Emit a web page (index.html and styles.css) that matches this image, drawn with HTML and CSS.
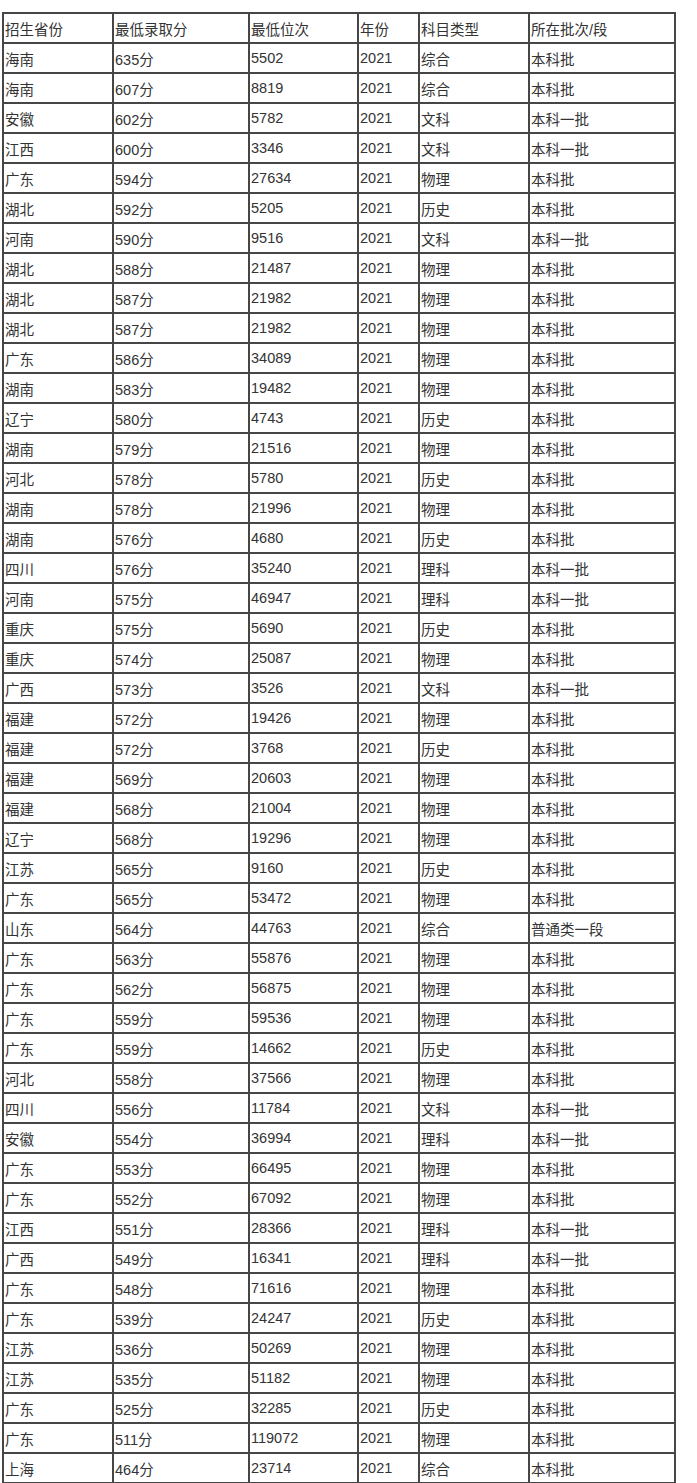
FILE: index.html
```html
<!DOCTYPE html>
<html lang="zh">
<head>
<meta charset="utf-8">
<title>录取分数</title>
<link rel="stylesheet" href="styles.css">
</head>
<body>
<div class="wrap">
<table class="scores">
<colgroup>
<col class="c1"><col class="c2"><col class="c3"><col class="c4"><col class="c5"><col class="c6">
</colgroup>
<tbody>
<tr><td>招生省份</td><td>最低录取分</td><td>最低位次</td><td>年份</td><td>科目类型</td><td>所在批次/段</td></tr>
<tr><td>海南</td><td>635分</td><td>5502</td><td>2021</td><td>综合</td><td>本科批</td></tr>
<tr><td>海南</td><td>607分</td><td>8819</td><td>2021</td><td>综合</td><td>本科批</td></tr>
<tr><td>安徽</td><td>602分</td><td>5782</td><td>2021</td><td>文科</td><td>本科一批</td></tr>
<tr><td>江西</td><td>600分</td><td>3346</td><td>2021</td><td>文科</td><td>本科一批</td></tr>
<tr><td>广东</td><td>594分</td><td>27634</td><td>2021</td><td>物理</td><td>本科批</td></tr>
<tr><td>湖北</td><td>592分</td><td>5205</td><td>2021</td><td>历史</td><td>本科批</td></tr>
<tr><td>河南</td><td>590分</td><td>9516</td><td>2021</td><td>文科</td><td>本科一批</td></tr>
<tr><td>湖北</td><td>588分</td><td>21487</td><td>2021</td><td>物理</td><td>本科批</td></tr>
<tr><td>湖北</td><td>587分</td><td>21982</td><td>2021</td><td>物理</td><td>本科批</td></tr>
<tr><td>湖北</td><td>587分</td><td>21982</td><td>2021</td><td>物理</td><td>本科批</td></tr>
<tr><td>广东</td><td>586分</td><td>34089</td><td>2021</td><td>物理</td><td>本科批</td></tr>
<tr><td>湖南</td><td>583分</td><td>19482</td><td>2021</td><td>物理</td><td>本科批</td></tr>
<tr><td>辽宁</td><td>580分</td><td>4743</td><td>2021</td><td>历史</td><td>本科批</td></tr>
<tr><td>湖南</td><td>579分</td><td>21516</td><td>2021</td><td>物理</td><td>本科批</td></tr>
<tr><td>河北</td><td>578分</td><td>5780</td><td>2021</td><td>历史</td><td>本科批</td></tr>
<tr><td>湖南</td><td>578分</td><td>21996</td><td>2021</td><td>物理</td><td>本科批</td></tr>
<tr><td>湖南</td><td>576分</td><td>4680</td><td>2021</td><td>历史</td><td>本科批</td></tr>
<tr><td>四川</td><td>576分</td><td>35240</td><td>2021</td><td>理科</td><td>本科一批</td></tr>
<tr><td>河南</td><td>575分</td><td>46947</td><td>2021</td><td>理科</td><td>本科一批</td></tr>
<tr><td>重庆</td><td>575分</td><td>5690</td><td>2021</td><td>历史</td><td>本科批</td></tr>
<tr><td>重庆</td><td>574分</td><td>25087</td><td>2021</td><td>物理</td><td>本科批</td></tr>
<tr><td>广西</td><td>573分</td><td>3526</td><td>2021</td><td>文科</td><td>本科一批</td></tr>
<tr><td>福建</td><td>572分</td><td>19426</td><td>2021</td><td>物理</td><td>本科批</td></tr>
<tr><td>福建</td><td>572分</td><td>3768</td><td>2021</td><td>历史</td><td>本科批</td></tr>
<tr><td>福建</td><td>569分</td><td>20603</td><td>2021</td><td>物理</td><td>本科批</td></tr>
<tr><td>福建</td><td>568分</td><td>21004</td><td>2021</td><td>物理</td><td>本科批</td></tr>
<tr><td>辽宁</td><td>568分</td><td>19296</td><td>2021</td><td>物理</td><td>本科批</td></tr>
<tr><td>江苏</td><td>565分</td><td>9160</td><td>2021</td><td>历史</td><td>本科批</td></tr>
<tr><td>广东</td><td>565分</td><td>53472</td><td>2021</td><td>物理</td><td>本科批</td></tr>
<tr><td>山东</td><td>564分</td><td>44763</td><td>2021</td><td>综合</td><td>普通类一段</td></tr>
<tr><td>广东</td><td>563分</td><td>55876</td><td>2021</td><td>物理</td><td>本科批</td></tr>
<tr><td>广东</td><td>562分</td><td>56875</td><td>2021</td><td>物理</td><td>本科批</td></tr>
<tr><td>广东</td><td>559分</td><td>59536</td><td>2021</td><td>物理</td><td>本科批</td></tr>
<tr><td>广东</td><td>559分</td><td>14662</td><td>2021</td><td>历史</td><td>本科批</td></tr>
<tr><td>河北</td><td>558分</td><td>37566</td><td>2021</td><td>物理</td><td>本科批</td></tr>
<tr><td>四川</td><td>556分</td><td>11784</td><td>2021</td><td>文科</td><td>本科一批</td></tr>
<tr><td>安徽</td><td>554分</td><td>36994</td><td>2021</td><td>理科</td><td>本科一批</td></tr>
<tr><td>广东</td><td>553分</td><td>66495</td><td>2021</td><td>物理</td><td>本科批</td></tr>
<tr><td>广东</td><td>552分</td><td>67092</td><td>2021</td><td>物理</td><td>本科批</td></tr>
<tr><td>江西</td><td>551分</td><td>28366</td><td>2021</td><td>理科</td><td>本科一批</td></tr>
<tr><td>广西</td><td>549分</td><td>16341</td><td>2021</td><td>理科</td><td>本科一批</td></tr>
<tr><td>广东</td><td>548分</td><td>71616</td><td>2021</td><td>物理</td><td>本科批</td></tr>
<tr><td>广东</td><td>539分</td><td>24247</td><td>2021</td><td>历史</td><td>本科批</td></tr>
<tr><td>江苏</td><td>536分</td><td>50269</td><td>2021</td><td>物理</td><td>本科批</td></tr>
<tr><td>江苏</td><td>535分</td><td>51182</td><td>2021</td><td>物理</td><td>本科批</td></tr>
<tr><td>广东</td><td>525分</td><td>32285</td><td>2021</td><td>历史</td><td>本科批</td></tr>
<tr><td>广东</td><td>511分</td><td>119072</td><td>2021</td><td>物理</td><td>本科批</td></tr>
<tr><td>上海</td><td>464分</td><td>23714</td><td>2021</td><td>综合</td><td>本科批</td></tr>
</tbody>
</table>
</div>
</body>
</html>
```

FILE: styles.css
```css
html, body {
  margin: 0;
  padding: 0;
  background: #ffffff;
}
.wrap {
  padding: 12px 0 0 2px;
}
.scores {
  border-collapse: collapse;
  table-layout: fixed;
  width: 672px;
  font-family: "Liberation Sans", "Noto Sans CJK SC", sans-serif;
  font-size: 14.5px;
  color: #333333;
}
.scores td {
  border: 2px solid #464646;
  padding: 0 0 0 1px;
  vertical-align: middle;
  white-space: nowrap;
  overflow: hidden;
  box-sizing: border-box;
  height: 30px;
}
.c1 { width: 110px; }
.c2 { width: 136px; }
.c3 { width: 109px; }
.c4 { width: 61px; }
.c5 { width: 110px; }
.c6 { width: 146px; }
```
